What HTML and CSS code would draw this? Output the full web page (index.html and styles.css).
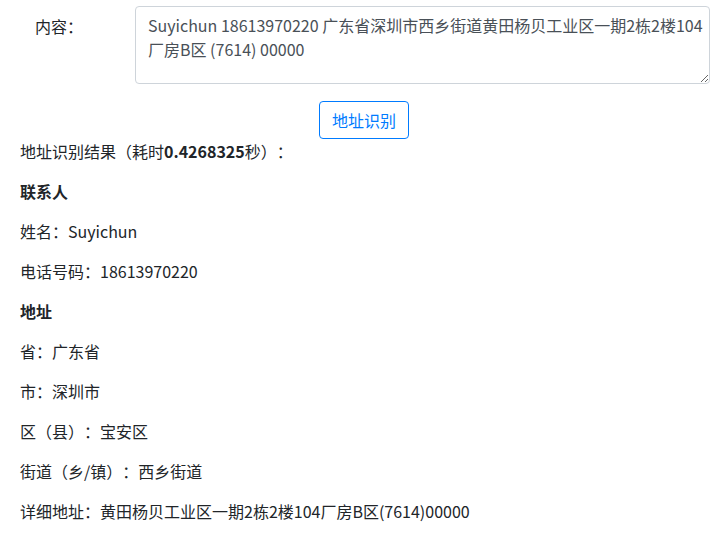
FILE: index.html
```html
<!DOCTYPE html>
<html lang="zh-CN">
<head>
    <meta charset="UTF-8">
    <meta name="viewport" content="width=device-width, initial-scale=1.0">
    <title>地址识别</title>
    <link rel="stylesheet" href="styles.css">
</head>
<body>
    <div class="container">
        <form id="parse-form">
            <div class="form-row">
                <label for="content">内容：</label>
                <textarea id="content">Suyichun 18613970220 广东省深圳市西乡街道黄田杨贝工业区一期2栋2楼104厂房B区 (7614) 00000</textarea>
            </div>
            <div class="btn-row">
                <button type="submit" class="btn-outline">地址识别</button>
            </div>
        </form>
        <div class="result">
            <p>地址识别结果（耗时<strong>0.4268325</strong>秒）：</p>
            <p><strong>联系人</strong></p>
            <p>姓名：Suyichun</p>
            <p>电话号码：18613970220</p>
            <p><strong>地址</strong></p>
            <p>省：广东省</p>
            <p>市：深圳市</p>
            <p>区（县）：宝安区</p>
            <p>街道（乡/镇）：西乡街道</p>
            <p>详细地址：黄田杨贝工业区一期2栋2楼104厂房B区(7614)00000</p>
        </div>
    </div>
</body>
</html>
```

FILE: styles.css
```css
body {
    font-family: "Noto Sans CJK SC", sans-serif;
    font-size: 16px;
    line-height: 1.5;
    color: #212529;
    background-color: #fff;
    margin: 0;
    padding: 0;
    text-spacing-trim: space-all;
}

.container {
    padding: 6px 18px 0 20px;
}

.form-row {
    display: flex;
}

.form-row label {
    width: 100px;
    padding: 8px 0 0 15px;
    flex-shrink: 0;
}

.form-row textarea {
    flex: 1;
    height: 78px;
    box-sizing: border-box;
    padding: 6px 4px 6px 12px;
    font-family: inherit;
    font-size: 16px;
    line-height: 1.5;
    color: #495057;
    border: 1px solid #ced4da;
    border-radius: 4px;
    margin: 0;
    text-spacing-trim: space-all;
}

.btn-row {
    display: flex;
    justify-content: center;
    margin-top: 17px;
    margin-left: -20px;
    margin-right: -18px;
}

.btn-outline {
    font-family: inherit;
    font-size: 16px;
    line-height: 1.5;
    padding: 6px 12px;
    color: #007bff;
    background-color: transparent;
    border: 1px solid #007bff;
    border-radius: 4px;
    cursor: pointer;
}

.btn-outline:hover {
    color: #fff;
    background-color: #007bff;
}

.result {
    margin-top: 0;
}

.result p {
    margin: 0 0 16px;
}

.result strong {
    font-weight: bold;
}
```
